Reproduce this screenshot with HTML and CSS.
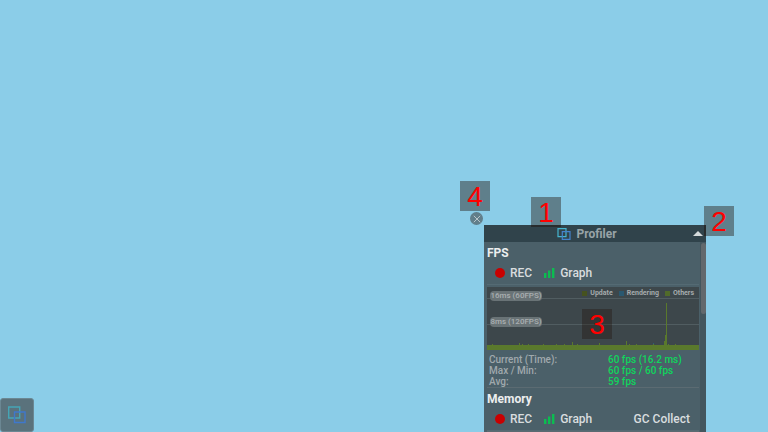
FILE: index.html
```html
<!DOCTYPE html>
<html lang="en">
<head>
<meta charset="utf-8">
<title>Profiler</title>
<link rel="stylesheet" href="styles.css">
</head>
<body>
<main class="stage">
  <button class="launcher" aria-label="Open debug menu">
    <svg viewBox="0 0 18 18" width="18" height="18" fill="none"><path d="M.7 1h11v11H.7z" stroke="#45a5b5" stroke-width="1.400"/><path d="M6.500 6h10.500v10.500H6.500z" stroke="#3f78cc" stroke-width="1.400"/></svg>
  </button>

  <button class="close" aria-label="Close">
    <svg viewBox="0 0 12 12" width="12" height="12" fill="none" stroke="#b9c5ca"><path d="M2.800 2.800l6.400 6.400M9.200 2.800l-6.400 6.400"/></svg>
  </button>

  <section class="window">
    <header class="titlebar">
      <svg class="logo" viewBox="0 0 14 14" width="14" height="14" fill="none"><path d="M1 1.600h8v8H1z" stroke="#45b5cf" stroke-width="1.200"/><path d="M5.300 4.600h7.700v7.800H5.300z" stroke="#4483cc" stroke-width="1.200"/></svg>
      <h1>Profiler</h1>
      <button class="collapse" aria-label="Collapse"><svg viewBox="0 0 10 5" width="10" height="5"><path d="M5 0l5 5H0z" fill="#d5dadb"/></svg></button>
    </header>
    <div class="body">
      <div class="content">
        <section class="group">
          <h2>FPS</h2>
          <div class="actions">
            <button class="action"><span class="dot"></span>REC</button>
            <button class="action"><svg viewBox="0 0 11 10" width="11" height="10" fill="#0bbd50"><path d="M0 5h2.400v5H0zM4 2.500h2.400V10H4zM8 0h2.400v10H8z"/></svg>Graph</button>
          </div>
          <div class="chart">
            <svg class="plot" viewBox="0 0 212 63" preserveAspectRatio="none">
              <path d="M0 11.500h212M0 37.500h212" stroke="#515d61"/>
              <path d="M0 58h212v5H0zM5 57h1v1H5zM32 56h1v2h-1zM35 57h1v1h-1zM41 57h1v1h-1zM56 57h1v1h-1zM69 57h1v1h-1zM77 57h1v1h-1zM85 55h1v3h-1zM90 57h1v1h-1zM112 56h1v2h-1zM139 54h1v4h-1zM142 57h1v1h-1zM149 57h1v1h-1zM166 57h1v1h-1zM177 54h1v4h-1zM178 48h1v10h-1zM179 16h1v42h-1zM181 57h1v1h-1zM188 57h1v1h-1z" fill="#5a792c"/>
              <path d="M166 56h1v1h-1z" fill="#28617b"/>
            </svg>
            <span class="limit limit-60">16ms (60FPS)</span>
            <span class="limit limit-120">8ms (120FPS)</span>
            <ul class="legend">
              <li class="update">Update</li>
              <li class="rendering">Rendering</li>
              <li class="others">Others</li>
            </ul>
          </div>
          <dl class="stats">
            <dt>Current (Time):</dt><dd>60 fps (16.2 ms)</dd>
            <dt>Max / Min:</dt><dd>60 fps / 60 fps</dd>
            <dt>Avg:</dt><dd>59 fps</dd>
          </dl>
        </section>
        <section class="group">
          <h2>Memory</h2>
          <div class="actions">
            <button class="action"><span class="dot"></span>REC</button>
            <button class="action"><svg viewBox="0 0 11 10" width="11" height="10" fill="#0bbd50"><path d="M0 5h2.400v5H0zM4 2.500h2.400V10H4zM8 0h2.400v10H8z"/></svg>Graph</button>
            <button class="action collect">GC Collect</button>
          </div>
        </section>
      </div>
      <div class="scroll"><div class="thumb"></div></div>
    </div>
    <span class="callout callout-1">1</span>
    <span class="callout callout-2">2</span>
    <span class="callout callout-3">3</span>
    <span class="callout callout-4">4</span>
  </section>
</main>
</body>
</html>
```
FILE: styles.css
```css
* { box-sizing: border-box; }

body {
  margin: 0;
  background: #8bcde8;
  font-family: Roboto, "Liberation Sans", sans-serif;
  font-weight: 500;
}

h1, h2, ul, dl, dd { margin: 0; padding: 0; }

button {
  padding: 0;
  border: 0;
  background: none;
  color: inherit;
  font: inherit;
}

svg { display: block; flex: none; }

.stage {
  position: relative;
  height: 100vh;
  overflow: hidden;
}

.launcher {
  position: absolute;
  left: 0;
  bottom: 0;
  display: grid;
  place-items: center;
  width: 34px;
  height: 34px;
  border: 1px solid #6b8793;
  border-radius: 3px;
  background: #5a727c;
}

.close {
  position: absolute;
  right: 285px;
  top: 212px;
  display: grid;
  place-items: center;
  width: 13px;
  height: 13px;
  border-radius: 50%;
  background: #617e8a;
}

.window {
  position: absolute;
  right: 62px;
  top: 225px;
  bottom: 0;
  display: flex;
  flex-direction: column;
  width: 222px;
  background: #4b6069;
}

.titlebar {
  display: flex;
  flex: none;
  align-items: center;
  justify-content: center;
  gap: 5px;
  position: relative;
  height: 17px;
  padding-right: 16px;
  background: #30434b;
  color: #98a3a7;
}

.titlebar h1 {
  padding-top: 1px;
  font-size: 12px;
  font-weight: 700;
  line-height: 17px;
}

.collapse {
  position: absolute;
  top: 6px;
  right: 3px;
}

.body {
  display: flex;
  flex: 1;
  min-height: 0;
  overflow: hidden;
}

.content {
  flex: 1;
  padding: 0 1px 0 3px;
}

.scroll {
  width: 6px;
  padding: 1px 0 0 1px;
  background: #44565e;
}

.thumb {
  height: 71px;
  border-radius: 3px;
  background: #63696d;
}

.group { border-bottom: 1px solid #5b6b72; }

.group h2 {
  padding-top: 1px;
  color: #eceeef;
  font-size: 12px;
  font-weight: 700;
  line-height: 20px;
}

.actions {
  display: flex;
  align-items: center;
  gap: 12px;
  height: 22px;
  padding: 0 9px 1px 8px;
  border-bottom: 1px solid #546a73;
  color: #d9dddf;
  font-size: 12px;
}

.action {
  display: flex;
  align-items: center;
  gap: 5px;
}

.collect { margin-left: auto; }

.dot {
  width: 10px;
  height: 10px;
  border-radius: 50%;
  background: #c80000;
}

.chart {
  position: relative;
  height: 63px;
  margin-top: 2px;
  background: #3d474b;
}

.plot { width: 100%; height: 100%; }

.limit {
  position: absolute;
  left: 3px;
  width: 52px;
  border-radius: 4px;
  background: #697376;
  color: #a9afb1;
  font-size: 8px;
  line-height: 10px;
  text-align: center;
}

.limit-60 { top: 4px; }
.limit-120 { top: 30px; }

.legend {
  position: absolute;
  top: 0;
  right: 0;
  display: flex;
  gap: 6px;
  padding: 0 5px 0 4px;
  color: #a5abad;
  font-size: 7px;
  font-weight: 700;
  line-height: 12px;
  list-style: none;
}

.legend li {
  display: flex;
  align-items: center;
  gap: 3px;
}

.legend li::before {
  width: 5px;
  height: 5px;
  background: #46521f;
  content: "";
}

.legend .rendering::before { background: #2a5870; }
.legend .others::before { background: #516b2a; }

.stats {
  display: grid;
  grid-template-columns: 119px 1fr;
  padding: 4px 2px 0;
  font-size: 10px;
  line-height: 11px;
}

.stats dt { color: #a0a9ad; }
.stats dd { color: #10d55c; }

.callout {
  position: absolute;
  display: grid;
  place-items: center;
  width: 30px;
  height: 30px;
  background: rgba(30, 10, 0, 0.4);
  color: #ff0000;
  font: 28px/32px "Liberation Sans", sans-serif;
}

.callout-1 { left: 47px; top: -28px; }
.callout-2 { left: 220px; top: -19px; }
.callout-3 {
  left: 98px;
  top: 84px;
  background: rgba(30, 10, 0, 0.3);
}
.callout-4 { left: -24px; top: -44px; }
```
